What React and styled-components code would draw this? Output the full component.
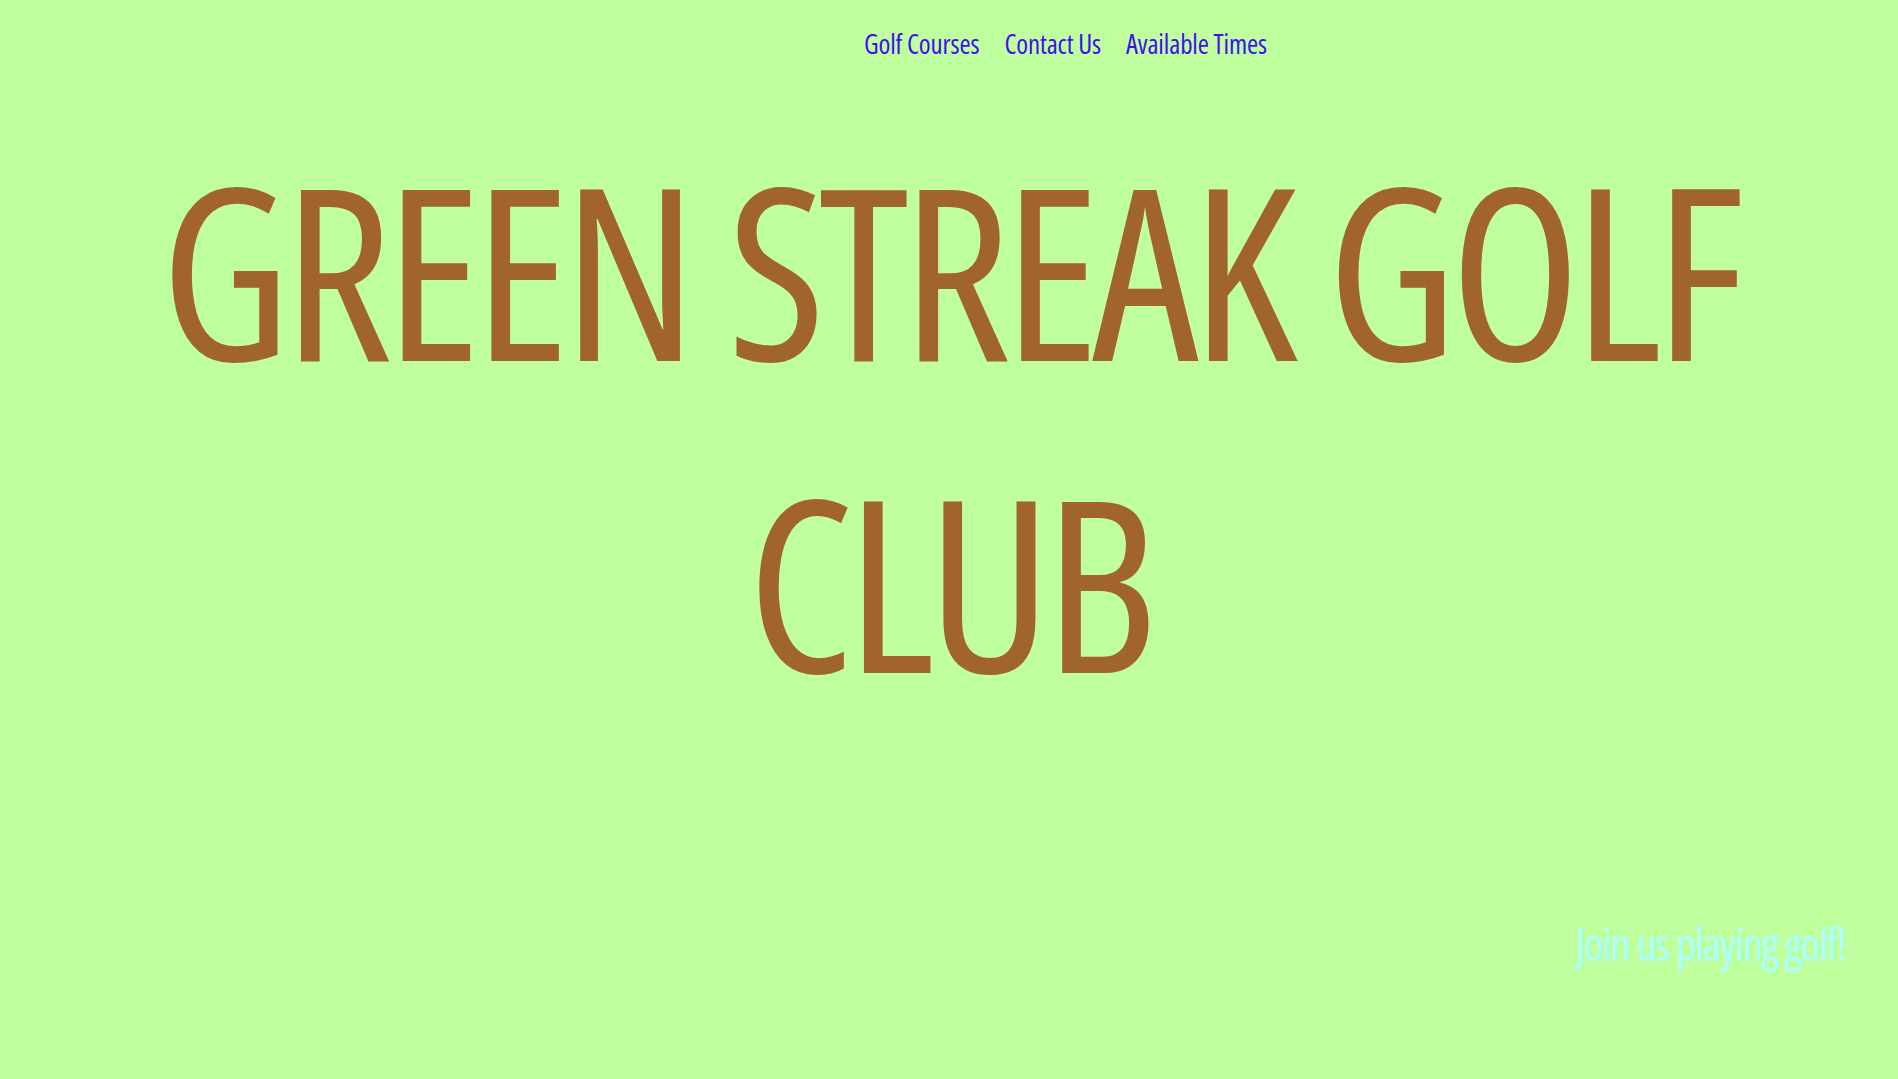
import React from 'react';
import styled, { createGlobalStyle } from 'styled-components';

const GlobalStyle = createGlobalStyle`
  html, body {
    margin: 0;
    padding: 0;
    background: #c0ff9e;
  }
  body {
    font-family: "Open Sans", "Liberation Sans", sans-serif;
    font-stretch: 75%;
  }
`;

const Page = styled.div`
  min-height: 1079px;
  display: flex;
  flex-direction: column;
`;

const Header = styled.header`
  display: flex;
  padding: 26px 0 0 864px;
`;

const Nav = styled.nav`
  display: flex;
  gap: 25px;
`;

const NavLink = styled.a`
  font-size: 27px;
  line-height: 36px;
  font-weight: 500;
  letter-spacing: -0.15px;
  color: #3f10f0;
  text-decoration: none;
  cursor: pointer;
`;

const Title = styled.h1`
  margin: 50px 0 0;
  font-size: 240px;
  line-height: 312px;
  font-weight: 500;
  letter-spacing: -0.03em;
  text-align: center;
  color: #a1652c;
`;

const Tagline = styled.p`
  margin: 176px 52px 0 0;
  align-self: flex-end;
  font-size: 45px;
  line-height: 63px;
  font-weight: 500;
  letter-spacing: -1.4px;
  color: #a8ffff;
`;

export default function App() {
  return (
    <>
      <GlobalStyle />
      <Page>
        <Header>
          <Nav>
            <NavLink>Golf Courses</NavLink>
            <NavLink>Contact Us</NavLink>
            <NavLink>Available Times</NavLink>
          </Nav>
        </Header>
        <Title>
          GREEN STREAK GOLF
          <br />
          CLUB
        </Title>
        <Tagline>Join us playing golf!</Tagline>
      </Page>
    </>
  );
}
